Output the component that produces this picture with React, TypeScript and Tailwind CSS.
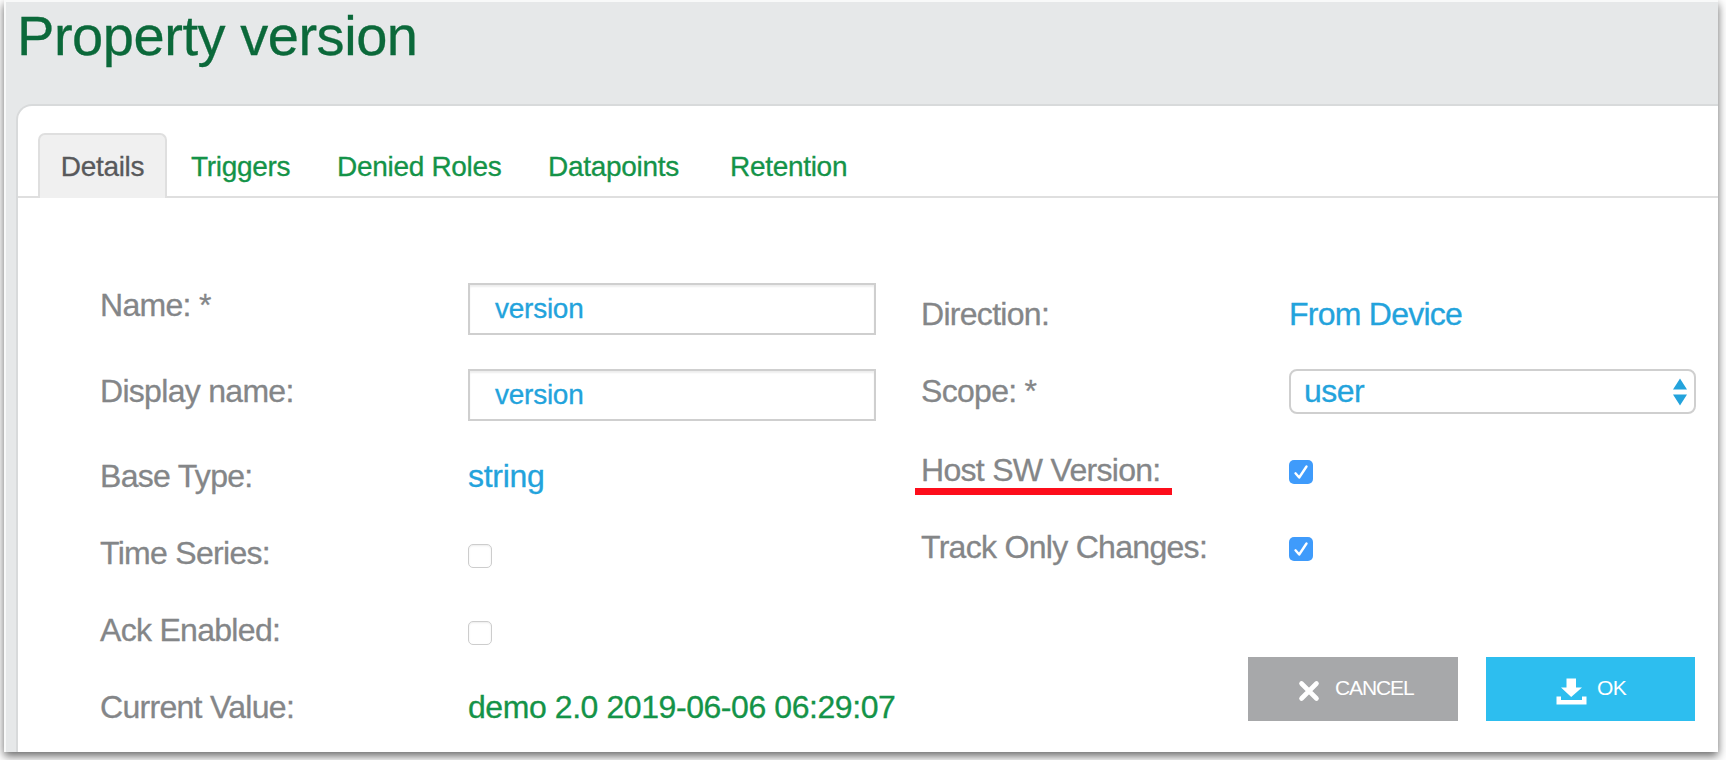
import type { ReactNode } from "react";

const TABS = [
  { label: "Triggers", width: "w-[146px]" },
  { label: "Denied Roles", width: "w-[211px]" },
  { label: "Datapoints", width: "w-[182px]" },
  { label: "Retention", width: "w-[160px]" },
];

function Row({ label, tall, nudge = "pb-[2px]", children }: { label: ReactNode; tall?: boolean; nudge?: string; children: ReactNode }) {
  return (
    <div className={`flex items-center ${tall ? "h-[86px]" : "h-[77px]"}`}>
      <div className={`w-[368px] shrink-0 tracking-[-0.7px] text-[#848688] ${nudge}`}>{label}</div>
      {children}
    </div>
  );
}

function TextInput({ value }: { value: string }) {
  return (
    <div className="flex h-[52px] w-[408px] items-center border-2 border-[#cfcfcf] pl-[25px] text-[28px] tracking-[-0.25px] text-[#23a3dc] shadow-[inset_0_2px_2px_rgba(0,0,0,0.07)]">
      <span>{value}</span>
    </div>
  );
}

function Checkbox({ checked, nudge }: { checked?: boolean; nudge: string }) {
  return checked ? (
    <span className={`flex size-6 items-center justify-center rounded-[5px] bg-[#3f9bfb] ${nudge}`}>
      <svg viewBox="0 0 24 24" className="size-6" fill="none" stroke="#fff" strokeWidth="2.4" strokeLinecap="round" strokeLinejoin="round">
        <path d="M6.5 13.3L10.2 17.5L17.5 6.5" />
      </svg>
    </span>
  ) : (
    <span className={`size-6 rounded-[5px] border-[1.5px] border-[#cdcdcd] bg-white shadow-[inset_0_1px_2px_rgba(0,0,0,0.08)] ${nudge}`} />
  );
}

export default function App() {
  return (
    <div className="h-[760px] w-[1726px] overflow-hidden bg-white pl-1 font-['Liberation_Sans',Arial,sans-serif] leading-none whitespace-nowrap [-webkit-text-stroke:0.3px]">
      <div className="h-[752px] w-[1714px] bg-[#f8f9f9] pt-[2px] pl-[2px] shadow-[0_4px_9px_rgba(0,0,0,0.6)]">
        <div className="flex h-[750px] flex-col bg-[#e6e8e9] pl-[10px]">
          <h1 className="h-[102px] pt-[6px] pl-px text-[56px] leading-[56px] tracking-[-0.45px] text-[#0b693a]">Property version</h1>
          <main className="flex grow flex-col rounded-tl-[16px] border-t-2 border-l-2 border-[#d8dadb] bg-white">
            <nav className="flex h-[92px] items-end border-b-2 border-[#dfdfdf] pl-5 text-[28px] tracking-[-0.3px] text-[#149348]">
              <div className="mr-[24px] -mb-[2px] flex h-[65px] w-[129px] items-center justify-center rounded-t-[7px] border-2 border-b-0 border-[#dfdfdf] bg-[#f0f0f0] text-[#58595b]">
                Details
              </div>
              {TABS.map((t) => (
                <div key={t.label} className={`flex h-[59px] items-center ${t.width}`}>{t.label}</div>
              ))}
            </nav>
            <div className="flex pt-[68px] pl-[82px] text-[32px] tracking-[-0.5px] text-[#23a3dc]">
              <section className="w-[821px]">
                <Row tall label="Name: *" nudge="pb-2"><TextInput value="version" /></Row>
                <Row tall label="Display name:" nudge="pb-2"><TextInput value="version" /></Row>
                <Row label="Base Type:"><span className="pb-[2px] tracking-[-0.3px]">string</span></Row>
                <Row label="Time Series:"><Checkbox nudge="mt-[4px]" /></Row>
                <Row label="Ack Enabled:"><Checkbox nudge="mt-[4px]" /></Row>
                <Row label="Current Value:"><span className="pb-[2px] tracking-[-0.43px] text-[#149348]">demo 2.0 2019-06-06 06:29:07</span></Row>
              </section>
              <section className="pt-[10px]">
                <Row label="Direction:"><span className="pb-[2px] tracking-[-0.75px]">From Device</span></Row>
                <Row label="Scope: *">
                  <div className="flex h-[45px] w-[407px] items-center justify-between rounded-[8px] border-2 border-[#cfcfcf] pr-[7px] pl-[13px]">
                    <span className="pb-px">user</span>
                    <svg viewBox="0 0 14 28" className="h-7 w-[14px]" fill="#23a3dc">
                      <path d="M7 0.5L14 11.5H0ZM0 16.5H14L7 27.5Z" />
                    </svg>
                  </div>
                </Row>
                <Row
                  nudge="pt-[3px]"
                  label={
                    <span className="relative">
                      Host SW Version:
                      <span className="absolute top-[36px] -left-[6px] h-[7px] w-[257px] bg-[#fd0d1b]" />
                    </span>
                  }
                >
                  <Checkbox checked nudge="mt-[7px]" />
                </Row>
                <Row label="Track Only Changes:" nudge="pt-[3px]"><Checkbox checked nudge="mt-[7px]" /></Row>
                <div className="mt-[73px] ml-[327px] flex gap-[28px] text-[21px] text-white [-webkit-text-stroke:0px]">
                  <button className="flex h-16 w-[210px] items-center bg-[#a7a8aa] pl-[50px]">
                    <svg viewBox="0 0 22 22" className="mt-[3px] size-[22px]" stroke="#fff" strokeWidth="4.6" strokeLinecap="round">
                      <path d="M3.5 3.5L18.5 18.5M18.5 3.5L3.5 18.5" />
                    </svg>
                    <span className="mb-[4px] ml-[15px] tracking-[-1.1px]">CANCEL</span>
                  </button>
                  <button className="flex h-16 w-[209px] items-center bg-[#2dbeef] pl-[70px]">
                    <svg viewBox="0 0 31 27" className="mt-[4px] h-[27px] w-[31px]" fill="#fff">
                      <path d="M10.5 0.5H20V9.5H26L15.2 19L5 9.5H10.5ZM0.5 18.5H5V22H26V18.5H30.5V26.5H0.5Z" />
                    </svg>
                    <span className="mb-[4px] ml-[10px] tracking-[-0.7px]">OK</span>
                  </button>
                </div>
              </section>
            </div>
          </main>
        </div>
      </div>
    </div>
  );
}
